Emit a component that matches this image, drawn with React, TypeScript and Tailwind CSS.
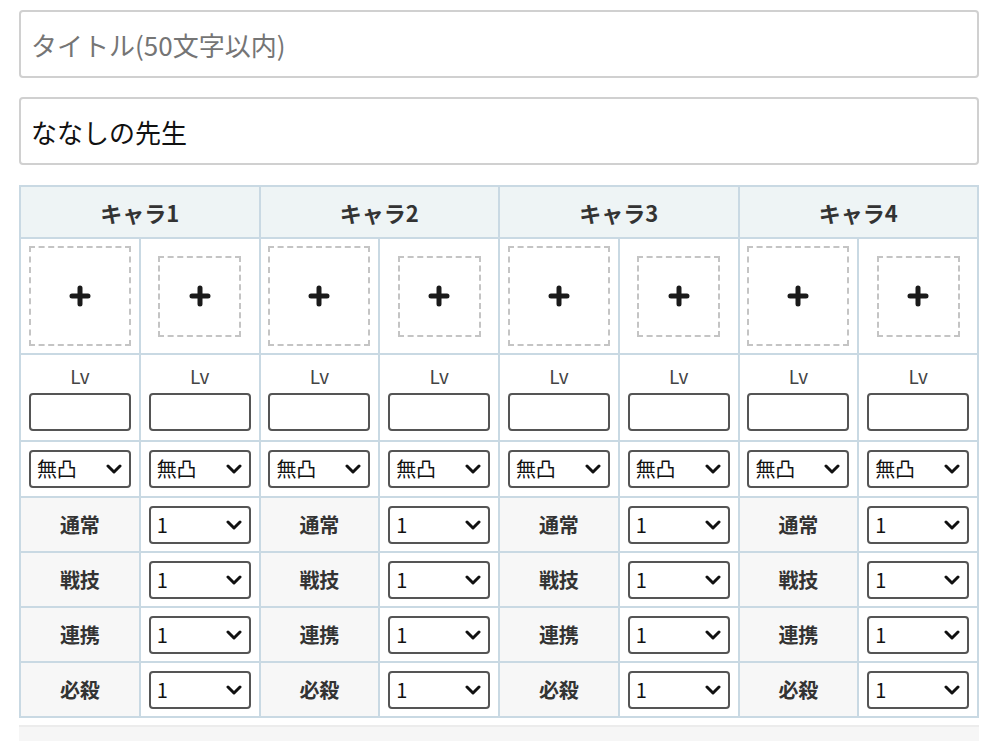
import { Fragment } from 'react'

const chars = ['キャラ1', 'キャラ2', 'キャラ3', 'キャラ4']
const skills = ['通常', '戦技', '連携', '必殺']

const font = { fontFamily: '"Noto Sans CJK JP", "Noto Sans", sans-serif' }

function Chevron() {
  return (
    <svg
      className="pointer-events-none absolute right-[9px] top-1/2 -translate-y-1/2"
      width="16"
      height="10"
      viewBox="0 0 16 10"
    >
      <path d="M2 2 L8 8 L14 2" fill="none" stroke="#111" strokeWidth="3" strokeLinecap="round" strokeLinejoin="round" />
    </svg>
  )
}

function Select({ value }: { value: string }) {
  return (
    <div className="relative mx-auto w-[102px]">
      <select
        defaultValue={value}
        className="h-[38px] w-full appearance-none rounded-[4px] border-2 border-[#555] bg-white pl-[6px] text-[20px] text-[#111] outline-none"
      >
        <option>{value}</option>
      </select>
      <Chevron />
    </div>
  )
}

function Plus() {
  return (
    <svg width="22" height="22" viewBox="0 0 22 22">
      <path d="M11 3 V19 M3 11 H19" stroke="#1a1a1a" strokeWidth="5" strokeLinecap="round" />
    </svg>
  )
}

export default function App() {
  return (
    <div className="min-h-[741px] bg-white pl-[19px] pr-[21px] pt-[10px]" style={font}>
      <input
        placeholder="タイトル(50文字以内)"
        className="block h-[68px] w-full rounded-[4px] border-2 border-[#d0d0d0] px-[10px] text-[26px] text-[#111] placeholder:text-[#757575] outline-none"
      />
      <input
        defaultValue="ななしの先生"
        className="mt-[19px] block h-[68px] w-full rounded-[4px] border-2 border-[#d0d0d0] px-[10px] text-[26px] text-[#111] outline-none"
      />

      <table className="mt-[20px] w-full table-fixed border-collapse border-2 border-[#c9d9e3]">
        <thead>
          <tr className="h-[52px] bg-[#eef4f5]">
            {chars.map((c) => (
              <th key={c} colSpan={2} className="border-2 border-[#c9d9e3] text-[22px] font-bold text-[#333]">
                {c}
              </th>
            ))}
          </tr>
        </thead>
        <tbody>
          <tr className="h-[116px]">
            {chars.map((c) => (
              <Fragment key={c}>
                <td className="border-2 border-[#c9d9e3]">
                  <div className="mx-auto flex h-[100px] w-[102px] items-center justify-center border-2 border-dashed border-[#c4c4c4]">
                    <Plus />
                  </div>
                </td>
                <td className="border-2 border-[#c9d9e3]">
                  <div className="mx-auto flex h-[81px] w-[83px] items-center justify-center border-2 border-dashed border-[#c4c4c4]">
                    <Plus />
                  </div>
                </td>
              </Fragment>
            ))}
          </tr>
          <tr className="h-[87px]">
            {chars.map((c) => (
              <Fragment key={c}>
                {[0, 1].map((i) => (
                  <td key={i} className="border-2 border-[#c9d9e3] align-top">
                    <div className="pt-[8px] text-center text-[19px] leading-[26px] text-[#444]">Lv</div>
                    <input className="mx-auto mt-[4px] block h-[38px] w-[102px] rounded-[4px] border-2 border-[#555] outline-none" />
                  </td>
                ))}
              </Fragment>
            ))}
          </tr>
          <tr className="h-[56px]">
            {chars.map((c) => (
              <Fragment key={c}>
                {[0, 1].map((i) => (
                  <td key={i} className="border-2 border-[#c9d9e3]">
                    <Select value="無凸" />
                  </td>
                ))}
              </Fragment>
            ))}
          </tr>
          {skills.map((s) => (
            <tr key={s} className="h-[55px]">
              {chars.map((c) => (
                <Fragment key={c}>
                  <td className="border-2 border-[#c9d9e3] bg-[#f7f7f7] text-center text-[20px] font-bold text-[#333]">
                    {s}
                  </td>
                  <td className="border-2 border-[#c9d9e3]">
                    <Select value="1" />
                  </td>
                </Fragment>
              ))}
            </tr>
          ))}
        </tbody>
      </table>

      <div className="mt-[7px] h-[20px] border-t-2 border-[#ececec] bg-[#f6f6f6]" />
    </div>
  )
}
